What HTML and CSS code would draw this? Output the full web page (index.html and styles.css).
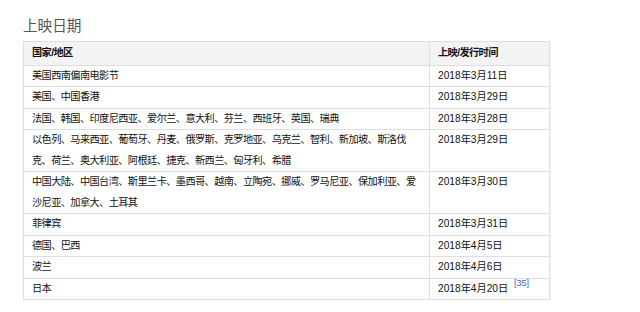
FILE: index.html
```html
<!DOCTYPE html>
<html lang="zh-CN">
<head>
<meta charset="utf-8">
<title>上映日期</title>
<link rel="stylesheet" href="styles.css">
</head>
<body>
<div class="section">
  <h2 class="title">上映日期</h2>
  <table class="release">
    <colgroup><col class="c1"><col class="c2"></colgroup>
    <thead>
      <tr><th>国家/地区</th><th>上映/发行时间</th></tr>
    </thead>
    <tbody>
      <tr><td>美国西南偏南电影节</td><td class="date">2018年3月11日</td></tr>
      <tr><td>美国、中国香港</td><td class="date">2018年3月29日</td></tr>
      <tr><td>法国、韩国、印度尼西亚、爱尔兰、意大利、芬兰、西班牙、英国、瑞典</td><td class="date">2018年3月28日</td></tr>
      <tr><td>以色列、马来西亚、葡萄牙、丹麦、俄罗斯、克罗地亚、乌克兰、智利、新加坡、斯洛伐克、荷兰、奥大利亚、阿根廷、捷克、新西兰、匈牙利、希腊</td><td class="date">2018年3月29日</td></tr>
      <tr><td>中国大陆、中国台湾、斯里兰卡、墨西哥、越南、立陶宛、挪威、罗马尼亚、保加利亚、爱沙尼亚、加拿大、土耳其</td><td class="date">2018年3月30日</td></tr>
      <tr><td>菲律宾</td><td class="date">2018年3月31日</td></tr>
      <tr><td>德国、巴西</td><td class="date">2018年4月5日</td></tr>
      <tr><td>波兰</td><td class="date">2018年4月6日</td></tr>
      <tr><td>日本</td><td class="date">2018年4月20日 <sup class="ref">[35]</sup></td></tr>
    </tbody>
  </table>
</div>
</body>
</html>
```
FILE: styles.css
```css
body {
  margin: 0;
  background: #fff;
  font-family: "Liberation Sans", "Noto Sans CJK SC", sans-serif;
  color: #111;
}
.section {
  padding: 15px 0 0 23px;
}
.title {
  margin: 0 0 6px;
  font-size: 14.6px;
  line-height: 20px;
  font-weight: normal;
  color: #555;
  font-family: "Noto Sans CJK SC", sans-serif;
}
.release {
  border-collapse: collapse;
  table-layout: fixed;
  width: 526px;
  box-shadow: 1px 1px 1px rgba(0,0,0,0.04);
}
.c1 { width: 406px; }
.c2 { width: 120px; }
.release th,
.release td {
  border: 1px solid #dedede;
  padding: 0 8px;
  line-height: 20.5px;
  font-size: 10.2px;
  letter-spacing: -0.6px;
  text-align: left;
  vertical-align: top;
}
.release th {
  background: #f3f3f3;
  font-weight: bold;
  padding: 1px 8px;
  color: #111;
}
.release td.date {
  font-size: 10.2px;
  letter-spacing: 0;
}
.ref {
  font-size: 9px;
  line-height: 1;
  color: #3a63c8;
  vertical-align: top;
  margin-left: 3px;
  letter-spacing: 0;
}
```
